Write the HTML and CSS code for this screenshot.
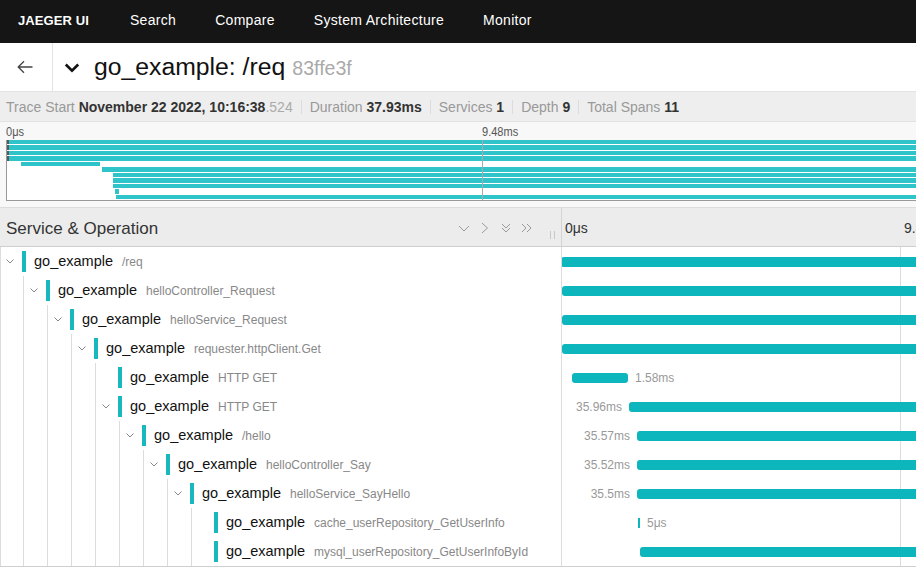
FILE: index.html
```html
<!DOCTYPE html>
<html>
<head>
<meta charset="utf-8">
<link rel="stylesheet" href="styles.css">
</head>
<body>
<nav class="topnav">
  <span class="brand">JAEGER UI</span>
  <span class="nav-item">Search</span>
  <span class="nav-item">Compare</span>
  <span class="nav-item">System Architecture</span>
  <span class="nav-item">Monitor</span>
</nav>
<header class="titlebar">
  <div class="back">
    <svg width="16" height="14" viewBox="0 0 16 14"><path d="M15.5 7H1.2M7 1.2L1.2 7 7 12.8" fill="none" stroke="#444" stroke-width="1.3"/></svg>
  </div>
  <div class="title">
    <svg class="title-chev" width="16" height="12" viewBox="0 0 16 12"><polyline points="1.8,2.5 8,8.7 14.2,2.5" fill="none" stroke="#111" stroke-width="2.6"/></svg>
    <h1>go_example: /req</h1>
    <span class="trace-id">83ffe3f</span>
  </div>
</header>
<div class="summary">
  <span>Trace Start <b>November 22 2022, 10:16:38</b><span class="frac">.524</span></span>
  <i class="sep"></i>
  <span>Duration <b>37.93ms</b></span>
  <i class="sep"></i>
  <span>Services <b>1</b></span>
  <i class="sep"></i>
  <span>Depth <b>9</b></span>
  <i class="sep"></i>
  <span>Total Spans <b>11</b></span>
</div>
<section class="minimap">
  <div class="mm-ticks">
    <span class="mm-tick" style="left:0px">0μs</span>
    <span class="mm-tick" style="left:476px">9.48ms</span>
  </div>
  <div class="mm-canvas">
    <i class="mm-line" style="left:475px"></i>
    <div class="mm-row"><div class="mm-bar first" style="margin-left:0px;width:1900px"></div></div>
    <div class="mm-row"><div class="mm-bar first" style="margin-left:0px;width:1900px"></div></div>
    <div class="mm-row"><div class="mm-bar first" style="margin-left:0px;width:1900px"></div></div>
    <div class="mm-row"><div class="mm-bar first" style="margin-left:0px;width:1900px"></div></div>
    <div class="mm-row"><div class="mm-bar" style="margin-left:14px;width:79px"></div></div>
    <div class="mm-row"><div class="mm-bar" style="margin-left:95px;width:1800px"></div></div>
    <div class="mm-row"><div class="mm-bar" style="margin-left:106px;width:1800px"></div></div>
    <div class="mm-row"><div class="mm-bar" style="margin-left:106px;width:1800px"></div></div>
    <div class="mm-row"><div class="mm-bar" style="margin-left:106px;width:1800px"></div></div>
    <div class="mm-row"><div class="mm-bar" style="margin-left:108px;width:4px"></div></div>
    <div class="mm-row"><div class="mm-bar" style="margin-left:109px;width:1800px"></div></div>
  </div>
</section>
<section class="trace-table">
  <div class="thead">
    <div class="th-left">
      <span class="th-title">Service &amp; Operation</span>
      <span class="th-icons">
        <svg width="12" height="12" viewBox="0 0 12 12"><polyline points="1,4 6,9 11,4" fill="none" stroke="#9a9a9a" stroke-width="1"/></svg>
        <svg width="12" height="12" viewBox="0 0 12 12"><polyline points="3,1 8.5,6 3,11" fill="none" stroke="#9a9a9a" stroke-width="1"/></svg>
        <svg width="12" height="12" viewBox="0 0 12 12"><polyline points="2,2 6,6 10,2" fill="none" stroke="#9a9a9a" stroke-width="1"/><polyline points="2,6 6,10 10,6" fill="none" stroke="#9a9a9a" stroke-width="1"/></svg>
        <svg width="13" height="12" viewBox="0 0 13 12"><polyline points="1,2 5,6 1,10" fill="none" stroke="#9a9a9a" stroke-width="1"/><polyline points="6,2 10,6 6,10" fill="none" stroke="#9a9a9a" stroke-width="1"/></svg>
      </span>
      <span class="resizer"></span>
    </div>
    <div class="th-right">
      <span class="th-tick" style="left:3px">0μs</span>
      <span class="th-tick" style="left:342px">9.48ms</span>
    </div>
  </div>
  <div class="rows">
    <div class="row">
      <div class="svc">
        <span class="toggle"><svg width="8" height="5" viewBox="0 0 8 5"><polyline points="0.5,0.5 4,4 7.5,0.5" fill="none" stroke="#888" stroke-width="1"/></svg></span>
        <span class="svc-bar"></span><span class="svc-name">go_example</span><span class="op">/req</span>
      </div>
      <div class="tl"><div class="bar" style="margin-left:-1px;width:400px"></div></div>
    </div>
    <div class="row">
      <div class="svc">
        <i class="guide"></i>
        <span class="toggle"><svg width="8" height="5" viewBox="0 0 8 5"><polyline points="0.5,0.5 4,4 7.5,0.5" fill="none" stroke="#888" stroke-width="1"/></svg></span>
        <span class="svc-bar"></span><span class="svc-name">go_example</span><span class="op">helloController_Request</span>
      </div>
      <div class="tl"><div class="bar" style="margin-left:0px;width:400px"></div></div>
    </div>
    <div class="row">
      <div class="svc">
        <i class="guide"></i><i class="guide"></i>
        <span class="toggle"><svg width="8" height="5" viewBox="0 0 8 5"><polyline points="0.5,0.5 4,4 7.5,0.5" fill="none" stroke="#888" stroke-width="1"/></svg></span>
        <span class="svc-bar"></span><span class="svc-name">go_example</span><span class="op">helloService_Request</span>
      </div>
      <div class="tl"><div class="bar" style="margin-left:0px;width:400px"></div></div>
    </div>
    <div class="row">
      <div class="svc">
        <i class="guide"></i><i class="guide"></i><i class="guide"></i>
        <span class="toggle"><svg width="8" height="5" viewBox="0 0 8 5"><polyline points="0.5,0.5 4,4 7.5,0.5" fill="none" stroke="#888" stroke-width="1"/></svg></span>
        <span class="svc-bar"></span><span class="svc-name">go_example</span><span class="op">requester.httpClient.Get</span>
      </div>
      <div class="tl"><div class="bar" style="margin-left:0px;width:400px"></div></div>
    </div>
    <div class="row">
      <div class="svc">
        <i class="guide"></i><i class="guide"></i><i class="guide"></i><i class="guide"></i>
        <span class="toggle"></span>
        <span class="svc-bar"></span><span class="svc-name">go_example</span><span class="op">HTTP GET</span>
      </div>
      <div class="tl"><div class="bar" style="margin-left:10px;width:56px"><span class="lbl after">1.58ms</span></div></div>
    </div>
    <div class="row">
      <div class="svc">
        <i class="guide"></i><i class="guide"></i><i class="guide"></i><i class="guide"></i>
        <span class="toggle"><svg width="8" height="5" viewBox="0 0 8 5"><polyline points="0.5,0.5 4,4 7.5,0.5" fill="none" stroke="#888" stroke-width="1"/></svg></span>
        <span class="svc-bar"></span><span class="svc-name">go_example</span><span class="op">HTTP GET</span>
      </div>
      <div class="tl"><div class="bar" style="margin-left:67px;width:400px"><span class="lbl before">35.96ms</span></div></div>
    </div>
    <div class="row">
      <div class="svc">
        <i class="guide"></i><i class="guide"></i><i class="guide"></i><i class="guide"></i><i class="guide"></i>
        <span class="toggle"><svg width="8" height="5" viewBox="0 0 8 5"><polyline points="0.5,0.5 4,4 7.5,0.5" fill="none" stroke="#888" stroke-width="1"/></svg></span>
        <span class="svc-bar"></span><span class="svc-name">go_example</span><span class="op">/hello</span>
      </div>
      <div class="tl"><div class="bar" style="margin-left:75px;width:400px"><span class="lbl before">35.57ms</span></div></div>
    </div>
    <div class="row">
      <div class="svc">
        <i class="guide"></i><i class="guide"></i><i class="guide"></i><i class="guide"></i><i class="guide"></i><i class="guide"></i>
        <span class="toggle"><svg width="8" height="5" viewBox="0 0 8 5"><polyline points="0.5,0.5 4,4 7.5,0.5" fill="none" stroke="#888" stroke-width="1"/></svg></span>
        <span class="svc-bar"></span><span class="svc-name">go_example</span><span class="op">helloController_Say</span>
      </div>
      <div class="tl"><div class="bar" style="margin-left:75px;width:400px"><span class="lbl before">35.52ms</span></div></div>
    </div>
    <div class="row">
      <div class="svc">
        <i class="guide"></i><i class="guide"></i><i class="guide"></i><i class="guide"></i><i class="guide"></i><i class="guide"></i><i class="guide"></i>
        <span class="toggle"><svg width="8" height="5" viewBox="0 0 8 5"><polyline points="0.5,0.5 4,4 7.5,0.5" fill="none" stroke="#888" stroke-width="1"/></svg></span>
        <span class="svc-bar"></span><span class="svc-name">go_example</span><span class="op">helloService_SayHello</span>
      </div>
      <div class="tl"><div class="bar" style="margin-left:75px;width:400px"><span class="lbl before">35.5ms</span></div></div>
    </div>
    <div class="row">
      <div class="svc">
        <i class="guide"></i><i class="guide"></i><i class="guide"></i><i class="guide"></i><i class="guide"></i><i class="guide"></i><i class="guide"></i><i class="guide"></i>
        <span class="toggle"></span>
        <span class="svc-bar"></span><span class="svc-name">go_example</span><span class="op">cache_userRepository_GetUserInfo</span>
      </div>
      <div class="tl"><div class="bar tiny" style="margin-left:76px;width:2px"><span class="lbl after">5μs</span></div></div>
    </div>
    <div class="row">
      <div class="svc">
        <i class="guide"></i><i class="guide"></i><i class="guide"></i><i class="guide"></i><i class="guide"></i><i class="guide"></i><i class="guide"></i><i class="guide"></i>
        <span class="toggle"></span>
        <span class="svc-bar"></span><span class="svc-name">go_example</span><span class="op">mysql_userRepository_GetUserInfoById</span>
      </div>
      <div class="tl"><div class="bar" style="margin-left:78px;width:400px"></div></div>
    </div>
  </div>
</section>
</body>
</html>
```

FILE: styles.css
```css
* { box-sizing: border-box; margin: 0; padding: 0; }
html, body { width: 916px; height: 569px; overflow: hidden; }
body { font-family: "Liberation Sans", Arial, Helvetica, sans-serif; background: #fff; color: #000; }

.topnav { height: 43px; background: #151515; color: #fff; display: flex; align-items: center; gap: 39px; padding: 0 0 3px 18px; font-size: 14px; }
.brand { font-weight: 700; font-size: 13px; letter-spacing: 0.1px; margin-right: 2px; }
.nav-item { letter-spacing: 0.3px; }

.titlebar { height: 49px; display: flex; border-bottom: 1px solid #e3e3e3; }
.back { width: 53px; flex: none; display: flex; align-items: center; justify-content: center; padding-right: 3px; border-right: 1px solid #e3e3e3; }
.title { display: flex; align-items: center; padding-left: 11px; }
.title-chev { margin-right: 14px; margin-top: 2px; }
.title h1 { font-size: 24.75px; font-weight: 400; color: #111; }
.trace-id { font-size: 19.6px; color: #aaa; margin-left: 7px; margin-top: 3px; }

.summary { height: 30px; background: #eeeeee; border-bottom: 1px solid #e2e2e2; display: flex; align-items: center; gap: 8px; padding-left: 6px; font-size: 14px; color: #999; white-space: nowrap; }
.summary b { color: #333; font-weight: 700; }
.summary .frac { color: #aaa; }
.sep { width: 1px; height: 14px; background: #dcdcdc; }

.minimap { height: 86px; padding: 2px 0 0 6px; background: #f8f8f8; border-bottom: 1px solid #dcdcdc; }
.mm-ticks { position: relative; height: 16px; }
.mm-tick { position: absolute; top: 1px; font-size: 12px; color: #555; transform: scaleX(0.92); transform-origin: left; }
.mm-canvas { position: relative; height: 61px; background: #fff; border-left: 1px solid #999; border-bottom: 1px solid #999; display: flex; flex-direction: column; overflow: hidden; }
.mm-line { position: absolute; top: 0; bottom: 0; width: 1px; background: #aaa; z-index: 1; }
.mm-row { flex: 1; display: flex; }
.mm-bar { flex: none; height: calc(100% - 1px); background: #2ec4c9; }
.mm-bar.first { border-left: 2px solid #5a5a5a; }

.thead { display: grid; grid-template-columns: 562px 1fr; height: 39px; background: #ececec; border-bottom: 1px solid #cfcfcf; }
.th-left { display: flex; align-items: center; padding: 3px 0 0 6px; border-right: 1px solid #d4d4d4; }
.th-title { font-size: 17px; color: #333; }
.th-icons { margin-left: auto; display: flex; gap: 9px; align-items: center; margin-top: -2px; }
.resizer { width: 5px; height: 8px; margin: 12px 6px 0 16px; border-left: 1px solid #c8c8c8; border-right: 1px solid #c8c8c8; }
.th-right { position: relative; overflow: hidden; }
.th-tick { position: absolute; top: 12px; font-size: 14px; color: #333; white-space: nowrap; }

.rows { box-shadow: inset 1px 0 0 #dcdcdc; border-bottom: 1px solid #cfcfcf; }
.row { display: grid; grid-template-columns: 562px 1fr; height: 29px; }
.svc { display: flex; align-items: center; border-right: 1px solid #dcdcdc; white-space: nowrap; overflow: hidden; }
.guide { flex: none; width: 24px; align-self: stretch; border-right: 1px solid #dcdcdc; }
.toggle { flex: none; width: 22px; height: 100%; display: flex; align-items: center; justify-content: center; padding-right: 2px; }
.svc-bar { flex: none; width: 4px; height: 21px; background: #17b8be; margin-right: 8px; }
.svc-name { font-size: 14.5px; color: #111; margin-top: -1px; }
.op { font-size: 12px; color: #888; margin-left: 9px; }

.tl { display: flex; align-items: center; overflow: hidden; background: linear-gradient(#dcdcdc, #dcdcdc) no-repeat 338px 0 / 1px 100%; }
.bar { position: relative; flex: none; height: 10px; border-radius: 3px; background: #0db5bc; }
.bar.tiny { border-radius: 0; }
.lbl { position: absolute; top: 50%; transform: translateY(-50%); font-size: 12px; color: #999; white-space: nowrap; }
.lbl.before { right: calc(100% + 7px); }
.lbl.after { left: calc(100% + 7px); }
```
